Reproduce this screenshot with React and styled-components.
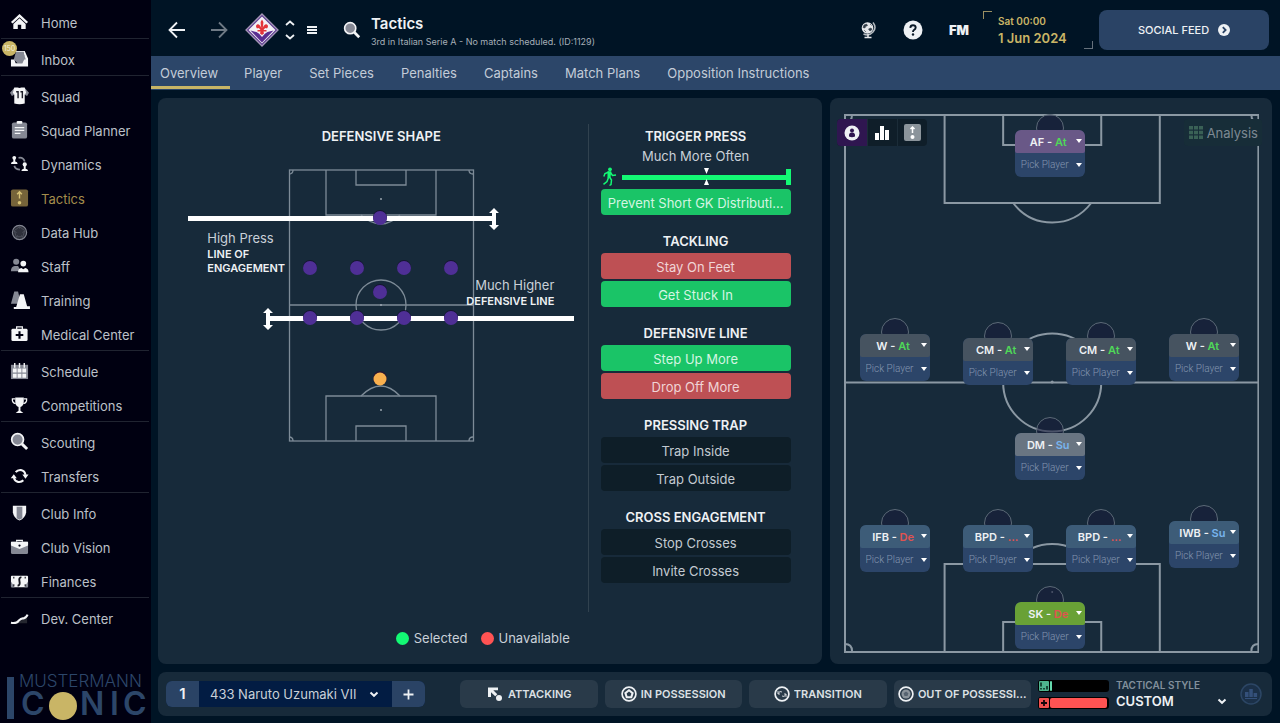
import React from "react";
import styled, { createGlobalStyle, css } from "styled-components";

const c = {
  page: "#001425",
  side: "#000011",
  panel: "#172a3a",
  nav: "#2c4669",
  text: "#c9d0d8",
  bright: "#eef1f4",
  gold: "#c9b566",
  green: "#1ac467",
  red: "#be5054",
};

const Global = createGlobalStyle`
  *, *::before, *::after { box-sizing: border-box; }
  body { margin: 0; background: ${c.page}; color: ${c.text}; font: 400 13px/18px Inter, "Open Sans", sans-serif; }
  button, select, input { font: inherit; color: inherit; margin: 0; }
  button { border: 0; padding: 0; background: none; cursor: pointer; }
  a { color: inherit; text-decoration: none; }
  h1, h2, p, ul { margin: 0; padding: 0; }
  svg { display: block; }
`;

const Shell = styled.div`
  display: grid;
  grid-template-columns: 151px minmax(0, 1fr);
  min-height: 100vh;
`;

/* Sidebar */
const Sidebar = styled.nav`
  background: ${c.side};
  display: flex;
  flex-direction: column;
  padding-top: 7px;
`;
const Group = styled.ul`
  list-style: none;
  display: flex;
  flex-direction: column;
  gap: 3px;
  margin: 0 2px 5px 1px;
  border-bottom: 1px solid ${(p) => (p.$last ? "transparent" : "#202431")};
`;
const SideLink = styled.a`
  position: relative;
  display: grid;
  grid-template-columns: 40px 1fr;
  align-items: center;
  height: 31px;
  font-size: 13px;
  white-space: nowrap;
  color: ${(p) => (p.$active ? "#a38d4c" : "#bcc0c8")};
  svg { margin: 0 0 3px 9px; }
`;
const Badge = styled.span`
  position: absolute;
  left: 1px;
  top: -3px;
  width: 15px;
  height: 15px;
  border-radius: 50%;
  background: ${c.gold};
  color: #f6f0dc;
  font-size: 7px;
  line-height: 15px;
  text-align: center;
`;
const Brand = styled.div`
  margin-top: auto;
`;

/* Header */
const Content = styled.div`
  display: flex;
  flex-direction: column;
  min-width: 0;
`;
const Header = styled.header`
  display: flex;
  align-items: center;
  height: 56px;
  padding: 4px 11px 0 17px;
`;
const IconButton = styled.button`
  display: flex;
  align-items: center;
  justify-content: center;
  width: ${(p) => p.$w || 18}px;
  height: 32px;
  margin-right: ${(p) => p.$gap || 0}px;
`;
const Crest = styled.div`
  margin: 0 6px 0 17px;
`;
const TitleBlock = styled.div`
  flex: 1;
  min-width: 0;
  padding-top: 4px;
`;
const Title = styled.h1`
  font-size: 15px;
  line-height: 20px;
  font-weight: 600;
  color: ${c.bright};
`;
const SubTitle = styled.p`
  font-size: 9px;
  line-height: 16px;
  color: #a6afb8;
`;
const Fm = styled.button`
  font-size: 13px;
  font-weight: 900;
  width: 22px;
  color: ${c.bright};
`;
const DateBox = styled.div`
  position: relative;
  width: 110px;
  height: 38px;
  margin: 0 6px 0 13px;
  padding: 2px 0 0 15px;
  color: ${c.gold};
  font-size: 13px;
  font-weight: 600;
  line-height: 17px;
  &::before, &::after { content: ""; position: absolute; width: 9px; height: 8px; }
  &::before { left: 0; top: 0; border: solid #9a8f62; border-width: 1px 0 0 1px; }
  &::after { right: 0; bottom: 0; border: solid #66717c; border-width: 0 1px 1px 0; }
`;
const Clock = styled.div`
  font-size: 10px;
`;
const Social = styled.button`
  display: flex;
  align-items: center;
  justify-content: center;
  gap: 9px;
  width: 170px;
  height: 40px;
  border-radius: 8px;
  background: #2a4365;
  color: ${c.bright};
  font-size: 11px;
  font-weight: 500;
`;
const Tabs = styled.nav`
  display: flex;
  gap: 1px;
  height: 34px;
  background: ${c.nav};
  padding-right: 16px;
`;
const Tab = styled.a`
  line-height: 34px;
  padding: 0 13px;
  color: #c3ccd8;
  white-space: nowrap;
  ${(p) => p.$active && css`
    padding: 0 12px 0 9px;
    box-shadow: inset 0 -1px ${c.nav}, inset 0 -4px ${c.gold};
  `}
`;

/* Panels */
const Main = styled.main`
  flex: 1;
  display: grid;
  grid-template-columns: minmax(0, 3fr) minmax(0, 2fr);
  gap: 8px;
  padding: 8px 8px 8px 7px;
`;
const Panel = styled.section`
  background: ${c.panel};
  border-radius: 8px;
  display: flex;
  flex-direction: column;
`;
const ShapePanel = styled(Panel)`
  padding: 26px 31px 17px 17px;
`;
const Columns = styled.div`
  flex: 1;
  display: grid;
  grid-template-columns: minmax(0, 1fr) 190px;
  gap: 12px;
`;
const ShapeColumn = styled.div`
  border-right: 1px solid #31424f;
  margin-bottom: 17px;
  display: flex;
  flex-direction: column;
  align-items: center;
`;
const Heading = styled.h2`
  font-size: 13px;
  line-height: 24px;
  font-weight: 600;
  text-align: center;
  color: ${c.bright};
  white-space: nowrap;
`;
const Diagram = styled.div`
  position: relative;
  width: 386px;
  height: 290px;
  margin-top: 12px;
`;
const LineLabel = styled.div`
  position: absolute;
  left: ${(p) => p.$x}px;
  top: ${(p) => p.$y}px;
  width: ${(p) => p.$w}px;
  text-align: ${(p) => p.$align};
  strong { display: block; font-size: 11px; line-height: 14px; font-weight: 600; color: ${c.bright}; }
`;
const Options = styled.div`
  display: flex;
  flex-direction: column;
  gap: 14px;
`;
const OptionGroup = styled.section`
  display: flex;
  flex-direction: column;
`;
const OptionList = styled.div`
  display: flex;
  flex-direction: column;
  gap: 2px;
`;
const tones = {
  on: ["#1ac467", "#d4f5e2"],
  off: ["#be5054", "#f0d4d6"],
  idle: ["#0e1e28", "#c3cad1"],
};
const Option = styled.button`
  height: 26px;
  padding: 1px 7px 0;
  border-radius: 4px;
  background: ${(p) => tones[p.$tone][0]};
  color: ${(p) => tones[p.$tone][1]};
  overflow: hidden;
  text-overflow: ellipsis;
  white-space: nowrap;
`;
const SliderLabel = styled.label`
  display: block;
  line-height: 17px;
  text-align: center;
`;
const SliderRow = styled.div`
  position: relative;
  display: flex;
  align-items: center;
  gap: 4px;
  height: 24px;
`;
const Slider = styled.input`
  appearance: none;
  flex: 1;
  min-width: 0;
  height: 16px;
  background: linear-gradient(#13f974, #13f974) center / 100% 5px no-repeat;
  &::-webkit-slider-thumb { appearance: none; width: 5px; height: 16px; background: #13f974; }
`;
const Marks = styled.svg`
  position: absolute;
  left: 102px;
  top: 3px;
`;
const Legend = styled.div`
  display: flex;
  justify-content: center;
  gap: 13px;
`;
const LegendItem = styled.span`
  display: flex;
  align-items: center;
  gap: 5px;
  &::before { content: ""; width: 13px; height: 13px; border-radius: 50%; background: ${(p) => p.$color}; }
`;

/* Formation pitch */
const PitchPanel = styled(Panel)`
  padding: 16px 13px 11px 14px;
`;
const Pitch = styled.div`
  position: relative;
  flex: 1;
  min-height: 538px;
`;
const PitchLines = styled.svg`
  position: absolute;
  inset: 0;
  width: 100%;
  height: 100%;
`;
const Tools = styled.div`
  position: absolute;
  left: -7px;
  top: 5px;
  display: flex;
  border-radius: 4px;
  overflow: hidden;
  background: #0f1e29;
`;
const Tool = styled.button`
  width: 30px;
  height: 27px;
  display: flex;
  align-items: center;
  justify-content: center;
  background: ${(p) => (p.$active ? "#2f1650" : "transparent")};
  & + & { border-left: 1px solid #1b2c38; }
`;
const Analysis = styled.button`
  position: absolute;
  right: -3px;
  top: 5px;
  height: 27px;
  padding: 0 4px 0 5px;
  display: flex;
  align-items: center;
  gap: 4px;
  border-radius: 4px;
  background: #172d38;
  color: #7d8993;
  font-size: 13px;
`;
const Spot = styled.div`
  position: absolute;
  left: ${(p) => (p.$x / 415) * 100}%;
  top: ${(p) => (p.$y / 539) * 100}%;
  width: 70px;
  &::before {
    content: "";
    position: absolute;
    left: 21px;
    top: -16px;
    width: 28px;
    height: 28px;
    border-radius: 50%;
    border: 1px solid #5c6a77;
    background: rgba(23, 27, 58, 0.55);
  }
`;
const Card = styled.div`
  position: relative;
  border-radius: 6px;
  overflow: hidden;
  background: #2c4569;
`;
const Role = styled.button`
  display: flex;
  align-items: center;
  justify-content: space-between;
  width: 100%;
  height: 23px;
  padding: 0 3px 0 0;
  background: ${(p) => p.$bg};
  color: ${c.bright};
  font-size: 11px;
  font-weight: 600;
  border-radius: 5px 5px 2px 2px;
`;
const RoleText = styled.span`
  flex: 1;
  padding: 0 0 0 ${(p) => (p.$tight ? 12 : 6)}px;
  text-align: ${(p) => (p.$tight ? "left" : "center")};
  white-space: nowrap;
`;
const Duty = styled.span`
  color: ${(p) => p.$color};
`;
const Picker = styled.label`
  display: flex;
  align-items: center;
  height: 24px;
  padding: 0 3px 0 6px;
`;
const PickerSelect = styled.select`
  appearance: none;
  flex: 1;
  min-width: 0;
  border: 0;
  padding: 0;
  background: none;
  color: #8496b0;
  font: 300 10px/22px Roboto, "Open Sans", sans-serif;
`;

/* Bottom bar */
const Footer = styled.footer`
  display: flex;
  align-items: center;
  height: 44px;
  margin: 0 8px 7px 7px;
  padding: 0 10px 0 8px;
  border-radius: 8px;
  background: ${c.panel};
`;
const Slot = styled.div`
  display: flex;
  width: 259px;
  height: 26px;
  margin-right: 35px;
  border-radius: 6px;
  overflow: hidden;
  background: #021c43;
`;
const SlotButton = styled.button`
  width: 33px;
  background: #2a4365;
  color: ${c.bright};
  font-size: 15px;
  font-weight: 600;
  display: flex;
  align-items: center;
  justify-content: center;
`;
const SlotLabel = styled.label`
  flex: 1;
  min-width: 0;
  display: flex;
  align-items: center;
  padding: 0 13px 0 11px;
`;
const PlainSelect = styled.select`
  appearance: none;
  flex: 1;
  min-width: 0;
  border: 0;
  padding: 0;
  background: none;
  font-weight: ${(p) => (p.$bold ? 600 : 400)};
  color: ${(p) => (p.$bold ? c.bright : c.text)};
`;
const Phases = styled.div`
  flex: 1;
  display: grid;
  grid-template-columns: repeat(4, minmax(0, 1fr));
  gap: 7px;
`;
const Phase = styled.button`
  display: flex;
  align-items: center;
  justify-content: center;
  gap: 4px;
  height: 28px;
  padding: 0 2px;
  border-radius: 6px;
  background: #293a49;
  color: #dde1e5;
  font-size: 11px;
  font-weight: 600;
  svg { flex: none; }
  span { overflow: hidden; text-overflow: ellipsis; white-space: nowrap; }
`;
const Meters = styled.div`
  width: 71px;
  margin: 0 7px;
  display: flex;
  flex-direction: column;
  gap: 5px;
`;
const Meter = styled.div`
  display: flex;
  align-items: center;
  gap: 1px;
  height: 12px;
  padding: 1px;
  border-radius: 3px;
  background: #000;
  &::after {
    content: "";
    width: ${(p) => p.$fill}px;
    height: 10px;
    border-radius: 2px;
    background: ${(p) => p.$color};
  }
`;
const StyleBox = styled.label`
  display: flex;
  flex-direction: column;
  width: 111px;
  margin-right: 13px;
  font-size: 10px;
  line-height: 14px;
  font-weight: 600;
  color: #82909c;
`;
const StyleRow = styled.span`
  display: flex;
  align-items: center;
  height: 18px;
  font-size: 13px;
`;

/* Icons */
const W = "#f4f5f7";
const G = "#858894";
const sideIcons = {
  home: <><path d="M1 10.500L10 2l9 8.500-1.800 1.700L10 5.500 2.800 12.200z" fill={W} /><path d="M3.500 12.500L10 6.500l6.500 6V18h-4.700v-4.500H8.200V18H3.500z" fill={W} /></>,
  inbox: <><path d="M6.500 2h7L17 11l-4 4H8l-4-4z" fill={G} /><path d="M6.500 3L5.500 2h10L19 10v8.500H1V11h3.500l1.500 4h7l2-4h1.500L14 3z" fill={W} /></>,
  squad: <><path d="M4.500 2L0 7l2 3.500L5 9zM15.500 2L20 7l-2 3.500L15 9z" fill={G} /><path d="M4.500 1.500H8q2 1 4 0h3.500L17 7l-1.500 2v9.500q-5.500 1.500-11 0V9L3 7z" fill={W} /><path d="M6.500 6h2v7M11 6h2v7" stroke="#1c1c28" strokeWidth="1.500" fill="none" /></>,
  planner: <><rect x="2" y="2.500" width="16" height="17" rx="2" fill={G} /><rect x="7" y="1" width="6" height="3" rx="1" fill={W} /><path d="M5 8h10M5 11h10M5 14h6" stroke={W} strokeWidth="1.300" /></>,
  dynamics: <><circle cx="4.500" cy="4" r="2" fill={W} /><path d="M1 10.500q0-2 2.500-2.500V5h2v3Q8 8.500 8 10.500z" fill={W} /><circle cx="15.500" cy="11" r="2.200" fill={W} /><path d="M12 18q0-2 2.500-2.500v-3h2v3Q19 16 19 18z" fill={W} /><path d="M9 4q5-1 6.500 4M4.500 12.500q1.500 4 6 4" stroke={G} strokeWidth="1.800" fill="none" /></>,
  tactics: <><rect x="1" y="1.500" width="18" height="18" rx="2" fill="#76643a" /><path d="M10 11V4M7.500 6.500L10 4l2.500 2.500" stroke="#d8c377" strokeWidth="1.500" fill="none" /><circle cx="10" cy="15.500" r="1.900" fill="#d8c377" /></>,
  data: <><circle cx="10" cy="11" r="7.500" fill="#2e303b" stroke={G} strokeWidth="1.200" /><path d="M10 5l5.500 4-2 6.500h-7L4.500 9zM10 4v3M17 9l-4 2M14 17l-2-3M6 17l2-3M3 9l4 2" stroke="#4b4e5a" fill="none" /></>,
  staff: <><circle cx="6.500" cy="6" r="3.200" fill={G} /><path d="M1 16q0-5 4-5.500h3.500l3 5.500z" fill={G} /><circle cx="14" cy="8" r="3" fill={W} /><path d="M8.500 17q0-4 3.500-4.500l2 1.500 2-1.500q3.500.5 3.500 4.500z" fill={W} /></>,
  training: <><path d="M-1.500 14.500H1L4.500 1.500h4l3 13z" fill={G} /><path d="M4 18h2.500l4-13.500h4L18 17h3v3H4z" fill={W} /></>,
  medical: <><path d="M7 5.500V3h6v2.500" stroke={W} strokeWidth="1.300" fill="none" /><rect x="1.500" y="5" width="17" height="13" rx="1.500" fill={W} /><path d="M10 7.500v8M6 11.500h8" stroke={c.side} strokeWidth="2.200" /></>,
  schedule: <><rect x="1" y="4" width="18" height="15" fill={G} /><path d="M5 2v5M10 2v5M15 2v5" stroke={W} strokeWidth="1.500" /><path d="M3 8h4v4H3zM8 8h4v4H8zM13 8h4v4h-4zM3 13.500h4v4H3zM8 13.500h4v4H8zM13 13.500h4v4h-4z" fill={W} /></>,
  trophy: <><path d="M5.500 2.500h9v4q0 5-3.500 6v4l3 2.500H6L9 16.500v-4Q5.500 11.500 5.500 6.500z" fill={W} /><path d="M5.500 4H2.500Q2 8.500 6 9M14.500 4h3Q18 8.500 14 9" stroke={W} strokeWidth="1.300" fill="none" /></>,
  search: <><path d="M12.500 12.500l5.500 5.500" stroke={W} strokeWidth="3" /><circle cx="8" cy="8" r="6.200" fill={G} stroke={W} strokeWidth="1.800" /></>,
  transfers: <><path d="M6 6.500Q8 4 11.500 4.300q4 .7 4.800 5M14 15q-2 2.200-5.500 1.700-3.500-.7-4.300-4" stroke={W} strokeWidth="2.200" fill="none" /><path d="M13 9h6.500l-3.200 4.300zM.8 13h6.400L4 8.800z" fill={W} /></>,
  shield: <><path d="M3 3h14v7q-1 6-7 8.500Q4 16 3 10z" fill={W} /><path d="M7 4h6v12l-3 1.500L7 16z" fill={G} /></>,
  brief: <><path d="M7 5V3.500h6V5" stroke={W} strokeWidth="1.300" fill="none" /><rect x="1" y="5" width="18" height="13" rx="1.500" fill={G} /><path d="M1 5h18v4l-9 3.500L1 9z" fill={W} /><circle cx="10" cy="9" r="1.200" fill={c.side} /></>,
  money: <><rect x="1" y="5" width="18" height="12" rx="1" fill={W} /><path d="M1 11v6h4zM19 11v6h-4z" fill={G} /><path d="M12 6.500Q9 7 10 11t-2 4.500" stroke="#15151f" strokeWidth="2" fill="none" /><path d="M4 6v2M16 6v2M4 14v2M16 14v2" stroke="#15151f" strokeWidth="1.200" /></>,
  dev: <><path d="M3 16q6-1 8-3 4-3 7-4v7z" fill="#24262f" /><path d="M1 15.500q6 1 8-2 3-3 5-2.500Q17 10.500 18.500 7" stroke={W} strokeWidth="2.200" fill="none" /></>,
};
const SideIcon = ({ name, size = 19 }) => (
  <svg width={size} height={size} viewBox="0 0 20 20" overflow="visible" aria-hidden="true">{sideIcons[name]}</svg>
);
const Caret = () => (
  <svg width="6" height="5" viewBox="0 0 6 5" aria-hidden="true"><path d="M0 0h6L3 4z" fill="#fff" /></svg>
);
const Chevron = ({ w = 10 }) => (
  <svg width={w} height="7" viewBox="0 0 10 7" aria-hidden="true"><path d="M1.500 1.500L5 4.800l3.500-3.300" stroke="#eef1f4" strokeWidth="2" fill="none" /></svg>
);

const groups = [
  [["home", "Home"]],
  [["inbox", "Inbox"]],
  [["squad", "Squad"], ["planner", "Squad Planner"], ["dynamics", "Dynamics"], ["tactics", "Tactics"], ["data", "Data Hub"], ["staff", "Staff"], ["training", "Training"], ["medical", "Medical Center"]],
  [["schedule", "Schedule"], ["trophy", "Competitions"]],
  [["search", "Scouting"], ["transfers", "Transfers"]],
  [["shield", "Club Info"], ["brief", "Club Vision"], ["money", "Finances"]],
  [["dev", "Dev. Center"]],
];
const tabs = ["Overview", "Player", "Set Pieces", "Penalties", "Captains", "Match Plans", "Opposition Instructions"];
const sections = [
  ["TACKLING", [["Stay On Feet", "off"], ["Get Stuck In", "on"]]],
  ["DEFENSIVE LINE", [["Step Up More", "on"], ["Drop Off More", "off"]]],
  ["PRESSING TRAP", [["Trap Inside", "idle"], ["Trap Outside", "idle"]]],
  ["CROSS ENGAGEMENT", [["Stop Crosses", "idle"], ["Invite Crosses", "idle"]]],
];
const duty = { At: "#4fd858", Su: "#78b4ee", De: "#e0524f", "...": "#e0524f" };
const midBg = "#465360";
const backBg = "#3d5c78";
const players = [
  ["AF", "At", 171, 16, "#695887"],
  ["W", "At", 16, 220, midBg],
  ["CM", "At", 119, 224, midBg],
  ["CM", "At", 222, 224, midBg],
  ["W", "At", 325, 220, midBg],
  ["DM", "Su", 171, 319, "#697582"],
  ["IFB", "De", 16, 411, backBg],
  ["BPD", "...", 119, 411, backBg],
  ["BPD", "...", 222, 411, backBg],
  ["IWB", "Su", 325, 407, backBg],
  ["SK", "De", 171, 488, "#69a136"],
];

const BrandMark = () => (
  <svg width="151" height="51" viewBox="0 0 151 51" role="img" aria-label="Mustermann Iconic">
    <g fill="#2c4669" fontFamily="Inter, sans-serif">
      <rect x="7" y="5" width="7" height="42" />
      <text x="19" y="15" fontSize="17" fontWeight="300">MUSTERMANN</text>
      <g fontSize="32" fontWeight="600">
        <text x="21" y="43">C</text>
        <text x="80" y="43">N</text>
        <text x="110" y="43">I</text>
        <text x="123" y="43">C</text>
      </g>
    </g>
    <circle cx="63" cy="34" r="14" fill={c.gold} />
  </svg>
);

const CrestMark = () => (
  <svg width="34" height="34" viewBox="0 0 34 34" role="img" aria-label="Club crest">
    <path d="M17 1l16 16-16 16L1 17z" fill="#5b3a8f" stroke="#a596b8" strokeWidth="1.300" />
    <path d="M17 3.500L30.500 17 17 30.500 3.500 17z" fill="#f4f1f6" />
    <path d="M5.500 17.500l6 1.500Q14 20 17 24q3-4 5.500-5l6-1.500L17 29.500z" fill="#5a2d91" />
    <path d="M17 6.500q2.300 2.500 1.200 5.500l-.5 3Q19.500 10.500 22 11.500q2 1.500 0 4-1.800-1.500-3.500 1.500h3v1.500h-3l.5 2-2 1.500-2-1.500.5-2h-3V17h3q-1.700-3-3.500-1.500-2-2.500 0-4 2.500-1 4.300 3.500l-.5-3Q14.700 9 17 6.500z" fill="#e3343a" />
  </svg>
);

const MiniPitch = () => {
  const dots = [[192, 58], [122, 108], [169, 108], [216, 108], [263, 108], [192, 132], [122, 158], [169, 158], [216, 158], [263, 158]];
  return (
    <svg width="386" height="290" viewBox="0 0 386 290" aria-hidden="true">
      <g stroke="#7d8b97" strokeWidth="1.300" fill="none">
        <rect x="101.500" y="10" width="184" height="271" />
        <path d="M138 10v45h110V10M168 10v15h50V10M138 281v-45h110v45M168 281v-15h50v15M101 145h184" />
        <circle cx="193" cy="145" r="25" />
        <path d="M173 55q20 18 39 0M173 236q20-20 39 0M101 14q4 0 4-4M281 10q0 4 4 4M101 277q4 0 4 4M281 281q0-4 4-4" />
      </g>
      <g fill="#9aa5ae"><circle cx="193" cy="39" r="1" /><circle cx="193" cy="145" r="1" /><circle cx="193" cy="250" r="1" /></g>
      <g fill="#fff">
        <rect x="0" y="56" width="305" height="5" /><rect x="81" y="156" width="305" height="5" />
        <path d="M306 48l5 5h-3v12h3l-5 5-5-5h3V53h-3zM80 148l5 5h-3v12h3l-5 5-5-5h3v-12h-3z" />
      </g>
      {dots.map(([x, y]) => (
        <g key={`${x}-${y}`}><circle cx={x} cy={y - 1} r="7" fill="#151432" /><circle cx={x} cy={y} r="7" fill="#4f2f96" /></g>
      ))}
      <circle cx="192" cy="218" r="7" fill="#2a1730" /><circle cx="192" cy="219" r="6.500" fill="#f9b04e" />
    </svg>
  );
};

const FormationLines = () => (
  <PitchLines viewBox="0 0 415 539" preserveAspectRatio="none" aria-hidden="true">
    <g stroke="#8b98a3" strokeWidth="2" fill="none">
      <rect x="1" y="1" width="413" height="537" />
      <path d="M100.500 1v88h215V1M159 1v30h98V1M100.500 537v-87h215v87M159 537v-29h98v29M1 268.500h413" />
      <circle cx="208" cy="268.500" r="49" />
      <path d="M169 89q15 19.500 39 19.500T247 89M169 450q15-20 39-20t39 20M1 8q7 0 7-7M407 1q0 7 7 7M1 530q7 0 7 7M407 537q0-7 7-7" />
    </g>
    <g fill="#8b98a3"><circle cx="208" cy="268" r="1.500" /><circle cx="208" cy="478" r="1" /></g>
  </PitchLines>
);

const Player = ({ role, d, x, y, bg }) => (
  <Spot $x={x} $y={y}>
    <Card>
      <Role $bg={bg} aria-haspopup="listbox">
        <RoleText $tight={role === "BPD"}>{role} - <Duty $color={duty[d]}>{d}</Duty></RoleText>
        <Caret />
      </Role>
      <Picker>
        <PickerSelect aria-label={`Player for ${role}`}><option>Pick Player</option></PickerSelect>
        <Caret />
      </Picker>
    </Card>
  </Spot>
);

const Ring = ({ children }) => (
  <svg width="16" height="16" viewBox="0 0 16 16" aria-hidden="true">
    <circle cx="8" cy="8" r="6.900" fill="none" stroke="#eef1f4" strokeWidth="1.700" />{children}
  </svg>
);

const phases = [
  ["ATTACKING", <svg key="a" width="18" height="16" viewBox="0 0 18 16" aria-hidden="true"><path d="M2 1.500h10v2.700H7.300l4 4-2.100 2.100-4.200-4V11H2z" fill="#eef1f4" /><circle cx="13" cy="12" r="3" fill="#eef1f4" /></svg>],
  ["IN POSSESSION", <Ring key="b"><path d="M8 3l4.800 3.700L11 12.300H5L3.200 6.700z" fill="#eef1f4" /><path d="M8 5.600l2.400 1.800-.9 2.800h-3l-.9-2.800z" fill="#293a49" /></Ring>],
  ["TRANSITION", <Ring key="c"><path d="M4 8q1.500-4 4-2M12 8q-1.500 4-4 2M4 5v3h2M12 11V8h-2" stroke="#cdd2d7" fill="none" /></Ring>],
  ["OUT OF POSSESSI...", <Ring key="d"><circle cx="8" cy="8" r="4.500" fill="#8b949c" /><path d="M8 5.500l2.400 1.800-.9 2.700h-3l-.9-2.700z" fill="#566370" /></Ring>],
];

export default function App() {
  return (
    <>
      <Global />
      <Shell>
        <Sidebar aria-label="Main">
          {groups.map((items, i) => (
            <Group key={items[0][1]} $last={i === groups.length - 1}>
              {items.map(([icon, label]) => (
                <li key={label}>
                  <SideLink href="#" $active={label === "Tactics"}>
                    <SideIcon name={icon} />
                    {label}
                    {label === "Inbox" && <Badge>150</Badge>}
                  </SideLink>
                </li>
              ))}
            </Group>
          ))}
          <Brand><BrandMark /></Brand>
        </Sidebar>

        <Content>
          <Header>
            <IconButton $gap={24} aria-label="Back">
              <svg width="18" height="18" viewBox="0 0 18 18"><path d="M17 9H2M9 1.500L1.500 9 9 16.500" stroke="#eef1f4" strokeWidth="1.800" fill="none" /></svg>
            </IconButton>
            <IconButton aria-label="Forward">
              <svg width="18" height="18" viewBox="0 0 18 18"><path d="M1 9h15M9 1.500L16.500 9 9 16.500" stroke="#6f7a85" strokeWidth="1.800" fill="none" /></svg>
            </IconButton>
            <Crest><CrestMark /></Crest>
            <IconButton $w={10} $gap={12} aria-label="Switch club">
              <svg width="10" height="20" viewBox="0 0 10 20"><path d="M1 5l4-3.500L9 5M1 15l4 3.500L9 15" stroke="#eef1f4" strokeWidth="1.800" fill="none" /></svg>
            </IconButton>
            <IconButton $w={10} $gap={26} aria-label="Menu">
              <svg width="10" height="8" viewBox="0 0 10 8"><path d="M0 1h10M0 4h10M0 7h10" stroke="#eef1f4" strokeWidth="1.800" /></svg>
            </IconButton>
            <IconButton $gap={10} aria-label="Search"><SideIcon name="search" size={18} /></IconButton>
            <TitleBlock>
              <Title>Tactics</Title>
              <SubTitle>3rd in Italian Serie A - No match scheduled. (ID:1129)</SubTitle>
            </TitleBlock>
            <IconButton $gap={26} aria-label="World">
              <svg width="18" height="18" viewBox="0 0 18 18">
                <circle cx="8.500" cy="7" r="5.800" fill="#e4e6e9" />
                <path d="M5 4l2.500-1 1 1.500-2 1-.5 1.500-2-.5zM9.500 8l2.500-1 1 1.500L11 10zM11 3l1.500 1.500M5 9l2 2" fill="#303c47" stroke="#303c47" strokeWidth=".6" />
                <path d="M14 1.500q4 5 0 9.500t-9.500 2" stroke="#b4babf" strokeWidth="1.500" fill="none" /><path d="M9 13v3M5.500 16.500h7" stroke="#e4e6e9" strokeWidth="1.500" />
              </svg>
            </IconButton>
            <IconButton $w={20} $gap={25} aria-label="Help">
              <svg width="20" height="20" viewBox="0 0 20 20"><circle cx="10" cy="10" r="9.500" fill="#eef1f4" /><path d="M7.300 7.800Q7.500 5.300 10 5.300t2.700 2.300Q12.700 9 11.200 9.800 10 10.500 10 12" stroke="#0a1826" strokeWidth="1.900" fill="none" /><circle cx="10" cy="14.500" r="1.200" fill="#0a1826" /></svg>
            </IconButton>
            <Fm>FM</Fm>
            <DateBox><Clock>Sat 00:00</Clock>1 Jun 2024</DateBox>
            <Social>
              SOCIAL FEED
              <svg width="12" height="12" viewBox="0 0 12 12" aria-hidden="true"><circle cx="6" cy="6" r="6" fill="#eef1f4" /><path d="M4.800 3.200L7.600 6 4.800 8.800" stroke="#2a4365" strokeWidth="1.800" fill="none" /></svg>
            </Social>
          </Header>

          <Tabs aria-label="Tactics">
            {tabs.map((t) => <Tab key={t} href="#" $active={t === "Overview"}>{t}</Tab>)}
          </Tabs>

          <Main>
            <ShapePanel>
              <Columns>
                <ShapeColumn>
                  <Heading>DEFENSIVE SHAPE</Heading>
                  <Diagram>
                    <MiniPitch />
                    <LineLabel $x={19} $y={69} $w={90} $align="left">High Press<strong>LINE OF ENGAGEMENT</strong></LineLabel>
                    <LineLabel $x={256} $y={116} $w={110} $align="right">Much Higher<strong>DEFENSIVE LINE</strong></LineLabel>
                  </Diagram>
                </ShapeColumn>
                <Options>
                  <OptionGroup>
                    <Heading>TRIGGER PRESS</Heading>
                    <SliderLabel htmlFor="press">Much More Often</SliderLabel>
                    <SliderRow>
                      <svg width="17" height="20" viewBox="0 0 17 20" aria-hidden="true">
                        <circle cx="9" cy="2.300" r="1.900" fill="#13f974" />
                        <path d="M8.500 10l2 3-.5 4.500-1.500 1M7.500 10.500L6 14.500l-3.500 2.800M8 5L4 6.500 2.800 9.500M9.500 5.500l2 3 3.500-.5" stroke="#13f974" strokeWidth="1.500" fill="none" />
                        <path d="M6.500 4.300h3.800l-.8 6.500-3 .2z" fill="#13f974" />
                      </svg>
                      <Slider id="press" type="range" min="0" max="4" defaultValue="4" />
                      <Marks width="7" height="17" viewBox="0 0 7 17" aria-hidden="true"><path d="M1 0h5L3.500 6zM1 17h5l-2.500-6z" fill="#fff" /></Marks>
                    </SliderRow>
                    <Option $tone="on" aria-pressed="true">Prevent Short GK Distributi...</Option>
                  </OptionGroup>
                  {sections.map(([title, opts]) => (
                    <OptionGroup key={title}>
                      <Heading>{title}</Heading>
                      <OptionList>
                        {opts.map(([label, tone]) => <Option key={label} $tone={tone} aria-pressed={tone === "on"}>{label}</Option>)}
                      </OptionList>
                    </OptionGroup>
                  ))}
                </Options>
              </Columns>
              <Legend>
                <LegendItem $color="#13f974">Selected</LegendItem>
                <LegendItem $color="#ff5353">Unavailable</LegendItem>
              </Legend>
            </ShapePanel>

            <PitchPanel>
              <Pitch>
                <FormationLines />
                <Tools>
                  <Tool $active aria-label="Players"><svg width="16" height="16" viewBox="0 0 16 16"><circle cx="8" cy="8" r="7.500" fill="#eef1f4" /><circle cx="8" cy="5.500" r="2" fill="#2f1650" /><path d="M5 11.500Q4.500 7.500 8 7.500t3 4q-3 1.500-6 0z" fill="#2f1650" /></svg></Tool>
                  <Tool aria-label="Statistics"><svg width="14" height="14" viewBox="0 0 14 14"><path d="M0 7h4v7H0zM5 0h4v14H5zM10 4h4v10h-4z" fill="#fff" /></svg></Tool>
                  <Tool aria-label="Instructions"><svg width="17" height="17" viewBox="0 0 17 17"><rect width="17" height="17" rx="2" fill="#8b949b" /><path d="M8.500 9V3M6.500 5l2-2 2 2" stroke="#fff" strokeWidth="1.500" fill="none" /><circle cx="8.500" cy="13" r="2" fill="#fff" /></svg></Tool>
                </Tools>
                <Analysis>
                  <svg width="14" height="13" viewBox="0 0 14 13" aria-hidden="true"><path d="M0 0h4v3.500H0zM5 0h4v3.500H5zM10 0h4v3.500h-4zM0 4.700h4v3.500H0zM5 4.700h4v3.500H5zM10 4.700h4v3.500h-4zM0 9.500h4V13H0zM5 9.500h4V13H5zM10 9.500h4V13h-4z" fill="#3a6156" /></svg>
                  Analysis
                </Analysis>
                {players.map(([role, d, x, y, bg]) => <Player key={`${x}-${y}`} role={role} d={d} x={x} y={y} bg={bg} />)}
              </Pitch>
            </PitchPanel>
          </Main>

          <Footer>
            <Slot>
              <SlotButton>1</SlotButton>
              <SlotLabel>
                <PlainSelect aria-label="Tactic"><option>433 Naruto Uzumaki VII</option></PlainSelect>
                <Chevron />
              </SlotLabel>
              <SlotButton aria-label="Add tactic"><svg width="11" height="11" viewBox="0 0 11 11"><path d="M5.500 0.500v10M0.500 5.500h10" stroke="#eef1f4" strokeWidth="1.800" /></svg></SlotButton>
            </Slot>
            <Phases>
              {phases.map(([label, icon]) => <Phase key={label}>{icon}<span>{label}</span></Phase>)}
            </Phases>
            <Meters>
              <Meter $color="#65d9ad" $fill={2}>
                <svg width="10" height="10" viewBox="0 0 10 10" aria-hidden="true"><rect width="10" height="10" rx="1" fill="#4fb48e" /><path d="M2 1.500v4M2 7v1.500M5 7v1.500M8 5v3.500" stroke="#06251b" strokeWidth="1.500" /></svg>
              </Meter>
              <Meter $color="#ff5353" $fill={57}>
                <svg width="10" height="10" viewBox="0 0 10 10" aria-hidden="true"><rect width="10" height="10" rx="1" fill="#f0504f" /><path d="M5 2v6M2 5h6" stroke="#14060a" strokeWidth="1.800" /></svg>
              </Meter>
            </Meters>
            <StyleBox>
              TACTICAL STYLE
              <StyleRow>
                <PlainSelect $bold><option>CUSTOM</option></PlainSelect>
                <Chevron />
              </StyleRow>
            </StyleBox>
            <IconButton $w={22} aria-label="Tactic analysis">
              <svg width="22" height="22" viewBox="0 0 22 22"><circle cx="11" cy="11" r="10" fill="#1b3048" stroke="#2c4665" strokeWidth="1.500" /><path d="M5 9h3.500v5H5zM9.300 6h3.500v8H9.300zM13.600 10h3.500v4h-3.500zM5 15h12v1H5z" fill="#34507a" /></svg>
            </IconButton>
          </Footer>
        </Content>
      </Shell>
    </>
  );
}
